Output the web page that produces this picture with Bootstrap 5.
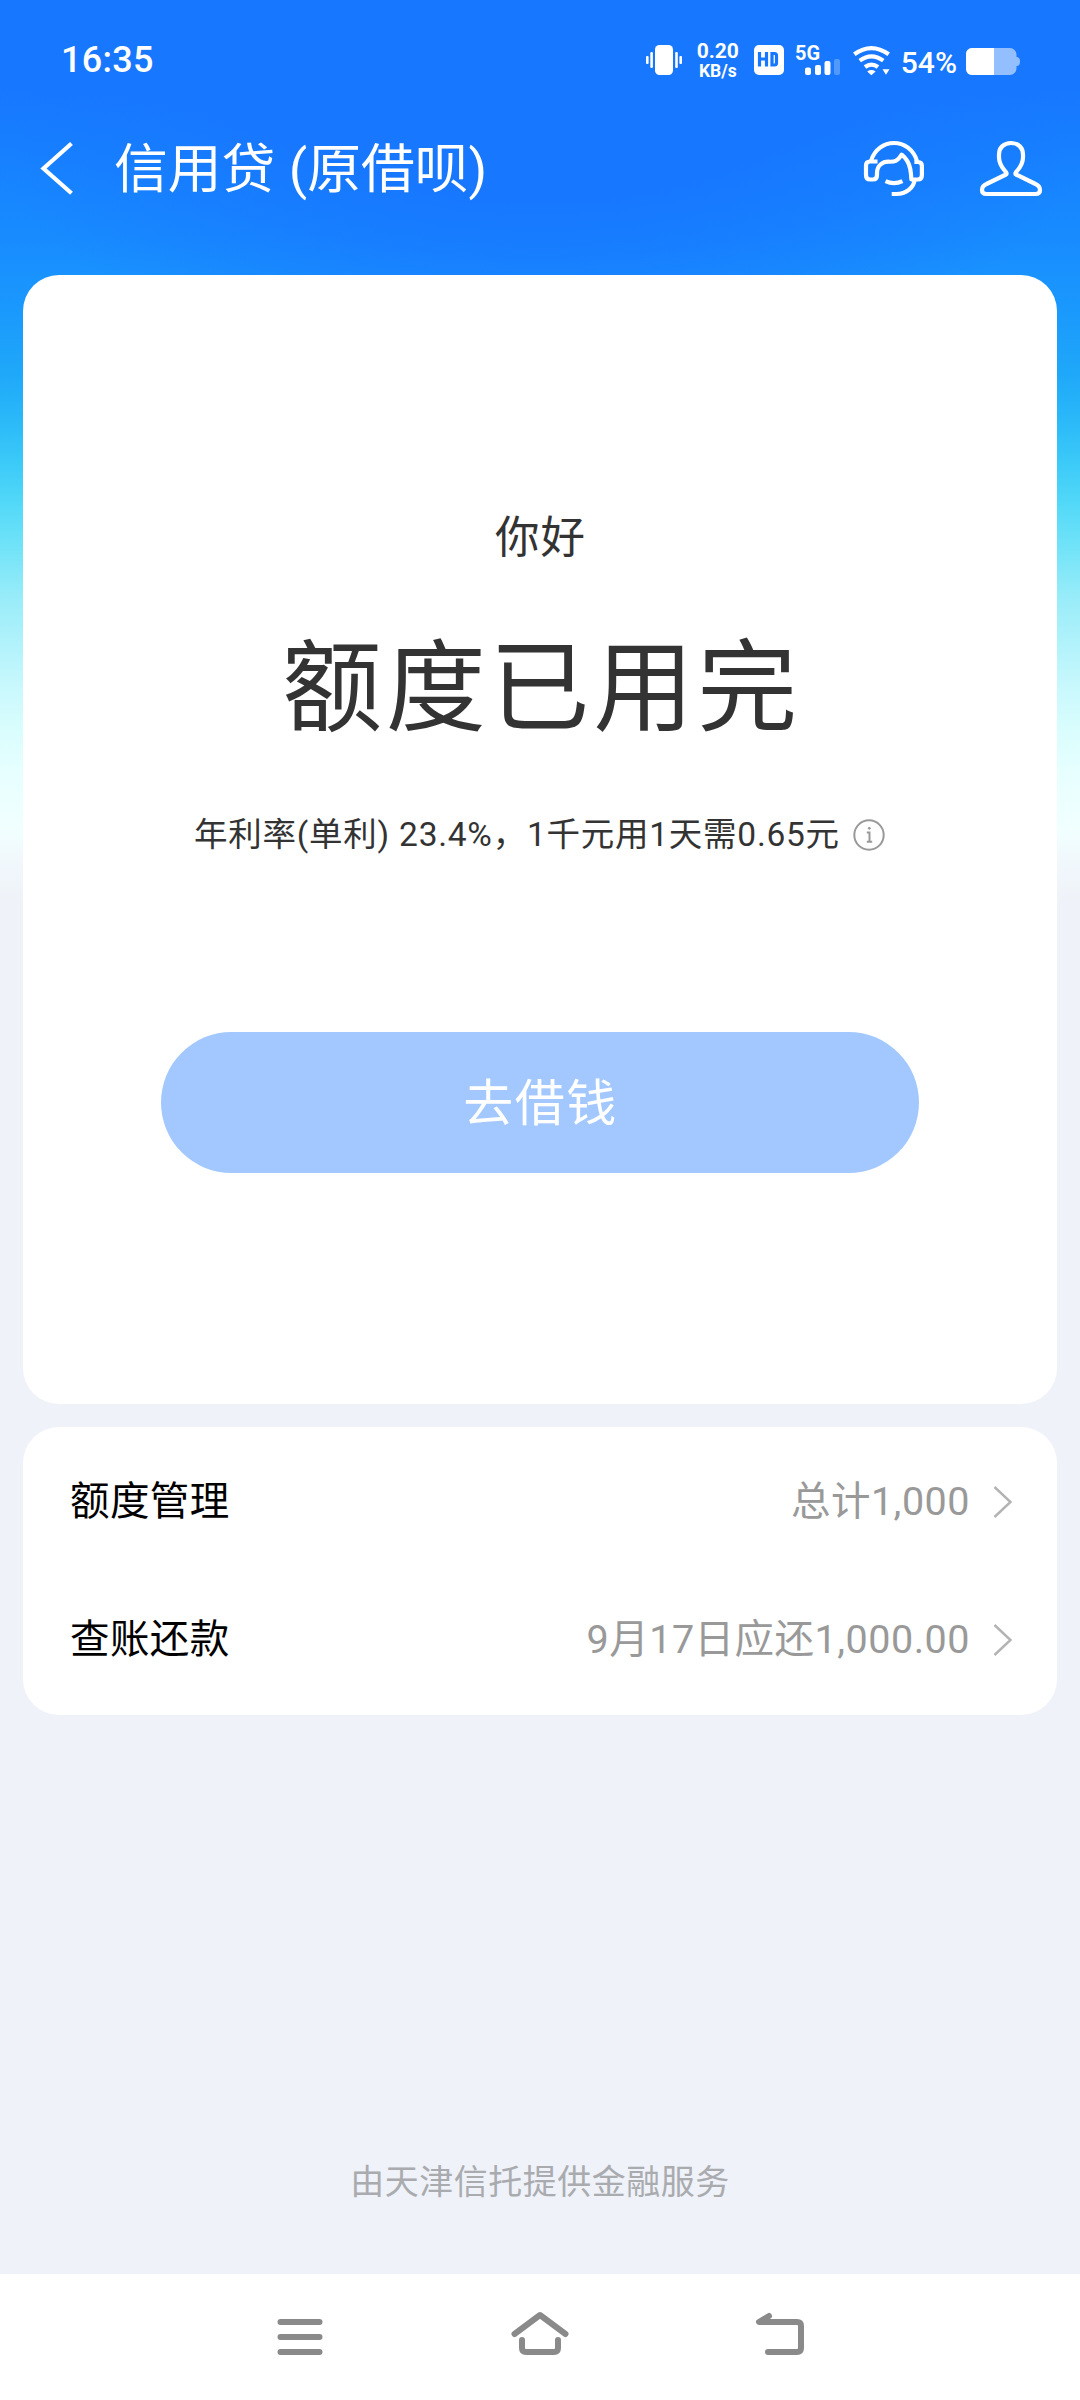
<!DOCTYPE html>
<html lang="zh-CN">
<head>
<meta charset="utf-8">
<meta name="viewport" content="width=device-width, initial-scale=1">
<title>信用贷</title>
<link href="https://cdn.jsdelivr.net/npm/bootstrap@5.3.0/dist/css/bootstrap.min.css" rel="stylesheet">
<style>
body{font-family:Roboto,"Noto Sans CJK SC",sans-serif;background:#eff2f8;color:#333;line-height:1;height:2400px;overflow:hidden}
.screen{height:2400px;background:
 radial-gradient(ellipse 620px 390px at 50% 0,rgba(23,119,255,1) 48%,rgba(23,119,255,0) 100%) no-repeat,
 linear-gradient(#1777ff 0,#1777ff 80px,#1782ff 160px,#188cff 240px,#1a98fd 307px,#1fa8f9 374px,#2ab8f9 418px,#3ccaf8 463px,#55daf8 508px,#75e4f8 552px,#98ecf9 597px,#b0f2fb 642px,#c8f8fd 686px,#dafdfd 731px,#e8ffff 776px,#f1ffff 829px,#f1f9fd 856px,#eff2f8 905px,#eff2f8 100%)}
.status{height:100px;padding:0 59px 0 61px}
.clock{font-size:36px;font-weight:500;letter-spacing:.3px;padding-top:42px}
.speed{width:44px;font-weight:700;text-align:center;padding-top:40px}
.speed-num{font-size:21px;line-height:22px}
.speed-unit{font-size:17.5px;line-height:18px}
.cell-gen{font-size:20px;font-weight:700}
.batt{font-size:30px;font-weight:500;padding-top:48px}
.titlebar{height:174.5px;padding:0 38px 0 37px}
.titlebar h1{font-size:53.8px;line-height:60px;font-weight:400;margin:39.5px 0 0 40px}
.panel{border-radius:36px;margin:0 23px;background:#fff}
.hero{height:1129px}
.hello{font-size:44.5px;line-height:60px;letter-spacing:1px;margin-top:233.5px;padding-left:1px}
.headline{font-size:100px;line-height:120px;letter-spacing:3.8px;margin-top:61px;padding-left:3px}
.rate{font-size:33.5px;line-height:44px;letter-spacing:.75px;margin-top:64px}
.btn-borrow{width:758px;height:141px;font-size:50px;letter-spacing:1.5px;background:#a2c8ff!important;color:#fff!important;opacity:1!important;margin-top:175px;border:0;padding:3px 0 0 1px}
.menu{height:288px;margin-top:23px;padding:6px 44px 0 47px}
.menu-row{height:138px;font-size:39.5px;letter-spacing:.4px;color:#000}
.menu-row .val{color:#999;margin-right:23px;letter-spacing:.5px}
.provider{font-size:34px;letter-spacing:.5px;color:#a9abaf}
.navkeys{height:126px;background:#fff}
</style>
</head>
<body>
<div class="screen d-flex flex-column">
  <header class="text-white">
    <div class="status d-flex align-items-start">
      <div class="clock me-auto">16:35</div>
      <svg width="38" height="32" viewBox="645 44 38 32" fill="#fff" style="margin-top:44px;margin-right:13px"><rect x="655" y="45" width="18" height="30" rx="4.5"/><rect x="650.3" y="52" width="2.6" height="16" rx="1"/><rect x="646" y="56" width="2.6" height="8" rx="1"/><rect x="675.2" y="52" width="2.6" height="16" rx="1"/><rect x="679.4" y="56" width="2.6" height="8" rx="1"/></svg>
      <div class="speed"><div class="speed-num">0.20</div><div class="speed-unit">KB/s</div></div>
      <svg width="102" height="40" viewBox="740 40 102 40" fill="#fff" style="margin-top:40px"><rect x="754" y="45" width="30" height="30" rx="5"/><path d="M759.5 52v14.500M759.500 59h7M766.500 52v14.500M772 53.500v11.500h2.500q2 0 2-2v-7.500q0-2-2-2z" fill="none" stroke="#1777ff" stroke-width="3.200"/><text x="795" y="59.500" class="cell-gen">5G</text><rect x="805" y="67.500" width="6" height="7.500" rx="2"/><rect x="815" y="65" width="6" height="10" rx="2"/><rect x="824.500" y="61" width="6" height="14" rx="2"/><rect x="834" y="59" width="6" height="16" rx="2" opacity=".25"/></svg>
      <svg width="40" height="32" viewBox="852 44 40 32" fill="none" stroke="#fff" stroke-width="4.200" style="margin-top:44px;margin-left:10px;margin-right:9px"><path d="M854.300 54.300q17-12.500 34.400 0M859.700 60.600q11.800-8.600 23.600 0M865 67q6.500-4.800 13 0"/><path d="M867.200 71.500q4.200-2.800 8.400 0l-4.200 3.800zM882.500 69.200h7l-3.500 5.600z" fill="#fff" stroke="none"/></svg>
      <div class="batt">54%</div>
      <svg class="ms-2" width="56" height="28" viewBox="965 48 56 28" style="margin-top:48px"><path d="M972 48h38a6.500 6.500 0 0 1 6.500 6.500v2.500q3.500 0 3.500 4.500t-3.500 4.500v2.500a6.500 6.500 0 0 1-6.500 6.500h-38a6 6 0 0 1-6-6v-15a6 6 0 0 1 6-6z" fill="#93bfff"/><path d="M994 48h-22a6 6 0 0 0-6 6v15a6 6 0 0 0 6 6h22z" fill="#fff"/></svg>
    </div>
    <div class="titlebar d-flex align-items-start">
      <svg width="36" height="56" viewBox="38 140 36 56" fill="none" stroke="#fff" stroke-width="4.200" style="margin-top:40px;margin-left:1px"><path d="M71.500 143.500L43.500 168.500L71.500 193.200"/></svg>
      <h1 class="me-auto">信用贷 (原借呗)</h1>
      <svg width="64" height="60" viewBox="862 139 64 60" fill="none" stroke="#fff" stroke-width="4.200" stroke-linejoin="round" style="margin-top:39px;margin-right:53px"><path d="M871 161C874.500 149.500 884 143 894 143S913.500 149.500 917 161"/><path d="M877.500 161.500H870q-4 0-4 4v9.500q0 4.500 4 4.500h3q4 0 4-4.500v-2c0-7.500 5.500-11.300 11.500-11.300 6.500 .4 9.500-1 13.200-7 5 4 7.300 8.500 8.500 14 .7 3.500 1 7 1.200 10.800h6.500q4 0 4-4.500v-9q0-4-4-4h-3.500" /><path d="M914.700 179.500c-1 8.500-8.500 14.500-18.500 14.500h-4.500M885.500 181.200q8.500 4 17 0"/></svg>
      <svg width="64" height="60" viewBox="979 139 64 60" fill="none" stroke="#fff" stroke-width="4.200" stroke-linejoin="round" style="margin-top:39px;margin-right:-1px"><path d="M1006 174.500l-19.500 9.500q-4.500 2-4.500 6 0 4 4.500 4h49q4.500 0 4.500-4 0-4-4.500-6L1016 174.500q-1.500-1 1-3.500c3-3.500 6-8 6-13.500v-3c0-7-5-11.500-12-11.500s-12 4.500-12 11.500v3c0 5.500 3 10 6 13.500q2.500 2.500 1 3.500z"/></svg>
    </div>
  </header>
  <main class="flex-grow-1 d-flex flex-column">
    <section class="panel hero d-flex flex-column align-items-center">
      <div class="hello">你好</div>
      <div class="headline">额度已用完</div>
      <div class="rate d-flex align-items-center">年利率(单利) 23.4%，1千元用1天需0.65元
        <svg width="34" height="34" viewBox="0 0 34 34" fill="none" stroke="#999" stroke-width="2" style="margin-left:12px"><circle cx="17" cy="17" r="14.700"/><path d="M14.800 14.500h2.700v9.500M14.800 23.800h5.400"/><circle cx="17.300" cy="10.300" r="1.400" fill="#999" stroke="none"/></svg>
      </div>
      <button class="btn btn-borrow rounded-pill" disabled>去借钱</button>
    </section>
    <section class="panel menu">
      <div class="menu-row d-flex align-items-center"><span class="me-auto">额度管理</span><span class="val">总计1,000</span><svg width="20" height="34" viewBox="0 0 20 34" fill="none" stroke="#b3b3b3" stroke-width="2.400"><path d="M1.500 2L17.500 17L1.500 32"/></svg></div>
      <div class="menu-row d-flex align-items-center"><span class="me-auto">查账还款</span><span class="val">9月17日应还1,000.00</span><svg width="20" height="34" viewBox="0 0 20 34" fill="none" stroke="#b3b3b3" stroke-width="2.400"><path d="M1.500 2L17.500 17L1.500 32"/></svg></div>
    </section>
    <div class="provider text-center mt-auto" style="margin-bottom:75px">由天津信托提供金融服务</div>
  </main>
  <nav class="navkeys d-flex justify-content-center">
    <svg width="540" height="126" viewBox="270 2274 540 126" fill="none" stroke="#8a8a8a" stroke-width="6" stroke-linecap="round" stroke-linejoin="round"><path d="M280.500 2322h39M280.500 2337h39M280.500 2352h39"/><path d="M514.500 2334L540 2315L565.500 2334M522 2340v8q0 4 4 4h28q4 0 4-4v-8"/><path d="M769 2316l-10 6h38q4 0 4 4v22q0 4-4 4h-29"/></svg>
  </nav>
</div>
<script src="https://cdn.jsdelivr.net/npm/bootstrap@5.3.0/dist/js/bootstrap.bundle.min.js"></script>
</body>
</html>
